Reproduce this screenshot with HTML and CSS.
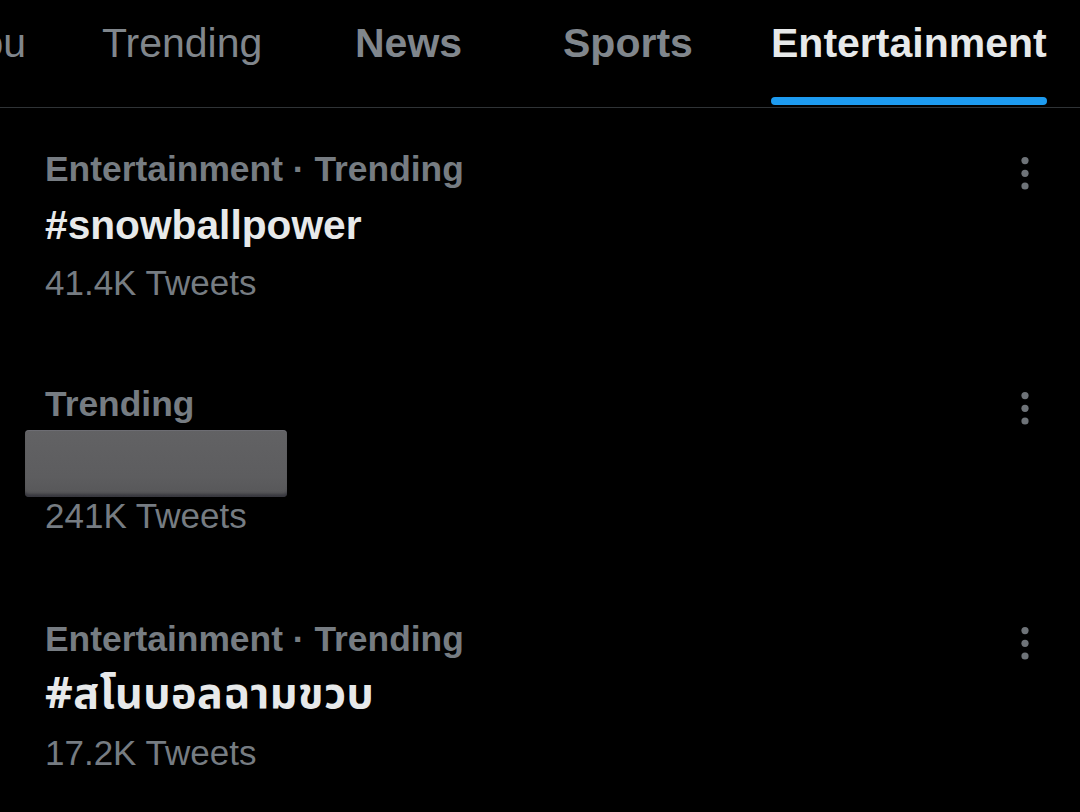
FILE: index.html
```html
<!DOCTYPE html>
<html lang="en">
<head>
<meta charset="utf-8">
<title>Explore - Entertainment</title>
<link rel="stylesheet" href="styles.css">
</head>
<body>
<div class="page">
  <nav class="tabs">
    <div class="tab tab-foryou"><span class="tab-label">For you</span><span class="tab-bar"></span></div>
    <div class="tab tab-trending"><span class="tab-label regular">Trending</span><span class="tab-bar"></span></div>
    <div class="tab tab-news"><span class="tab-label">News</span><span class="tab-bar"></span></div>
    <div class="tab tab-sports"><span class="tab-label">Sports</span><span class="tab-bar"></span></div>
    <div class="tab tab-ent active"><span class="tab-label">Entertainment</span><span class="tab-bar"></span></div>
  </nav>

  <section class="trends">
    <article class="trend">
      <div class="trend-body">
        <div class="trend-meta">Entertainment · Trending</div>
        <div class="trend-title">#snowballpower</div>
        <div class="trend-count">41.4K Tweets</div>
      </div>
      <svg class="more" viewBox="0 0 10 34" width="10" height="34" aria-hidden="true">
        <circle cx="5" cy="3.6" r="3.6"/><circle cx="5" cy="16.3" r="3.6"/><circle cx="5" cy="29" r="3.6"/>
      </svg>
    </article>

    <article class="trend">
      <div class="trend-body">
        <div class="trend-meta">Trending</div>
        <div class="redacted"></div>
        <div class="trend-count">241K Tweets</div>
      </div>
      <svg class="more" viewBox="0 0 10 34" width="10" height="34" aria-hidden="true">
        <circle cx="5" cy="3.6" r="3.6"/><circle cx="5" cy="16.3" r="3.6"/><circle cx="5" cy="29" r="3.6"/>
      </svg>
    </article>

    <article class="trend">
      <div class="trend-body">
        <div class="trend-meta">Entertainment · Trending</div>
        <div class="trend-title thai">#สโนบอลฉามขวบ</div>
        <div class="trend-count">17.2K Tweets</div>
      </div>
      <svg class="more" viewBox="0 0 10 34" width="10" height="34" aria-hidden="true">
        <circle cx="5" cy="3.6" r="3.6"/><circle cx="5" cy="16.3" r="3.6"/><circle cx="5" cy="29" r="3.6"/>
      </svg>
    </article>
  </section>
</div>
</body>
</html>
```

FILE: styles.css
```css
html, body {
  margin: 0;
  padding: 0;
  background: #000;
}

body {
  font-family: "Liberation Sans", Arial, "Noto Sans Thai", "Noto Sans", sans-serif;
  color: #e7e9ea;
  overflow: hidden;
  width: 1080px;
  height: 812px;
}

.page {
  width: 1080px;
}

/* ---------- tabs ---------- */
.tabs {
  display: flex;
  border-bottom: 1px solid #2f3336;
  height: 107px;
  margin-left: -113px;
  white-space: nowrap;
}

.tab {
  display: flex;
  flex-direction: column;
  flex: none;
  padding-top: 19px;
  box-sizing: border-box;
}

.tab-label {
  font-size: 41px;
  line-height: 48px;
  font-weight: 700;
  color: #80868c;
}

.tab-label.regular,
.tab-foryou .tab-label {
  font-weight: 400;
}

.tab-bar {
  display: block;
  height: 8px;
  margin-top: 30px;
  border-radius: 4px;
  background: transparent;
}

.tab-foryou { width: 215px; }
.tab-trending { width: 253px; }
.tab-news { width: 208px; }
.tab-sports { width: 208px; }
.tab-ent { width: 276px; }

.tab.active .tab-label {
  color: #e7e9ea;
}

.tab.active .tab-bar {
  background: #1d9bf0;
}

/* ---------- trends ---------- */
.trend {
  display: flex;
  align-items: flex-start;
  padding: 37px 50px 34px 45px;
  height: 235px;
  box-sizing: border-box;
}

.trend-body {
  flex: 1;
  min-width: 0;
}

.trend-meta {
  font-size: 35.4px;
  line-height: 48px;
  font-weight: 700;
  color: #767c82;
}

.trend-title {
  font-size: 40.7px;
  line-height: 64px;
  font-weight: 700;
  color: #e7e9ea;
}

.trend-title.thai {
  font-family: "Noto Sans Thai", "Liberation Sans", "Noto Sans", sans-serif;
  font-size: 43px;
  letter-spacing: 0.5px;
}

.trend-count {
  font-size: 35px;
  line-height: 52px;
  font-weight: 400;
  color: #767c82;
}

.redacted {
  width: 262px;
  height: 67px;
  margin: 2px 0 -7px -20px;
  border-radius: 4px;
  background: linear-gradient(180deg, #626264 0%, #5d5d5f 70%, #565658 100%);
  box-shadow: inset 0 -5px 3px -2px rgba(30, 30, 40, 0.55), inset 0 1px 0 rgba(120, 120, 130, 0.5);
}

.more {
  flex: none;
  margin-top: 11.5px;
  fill: #6e7378;
}
```
